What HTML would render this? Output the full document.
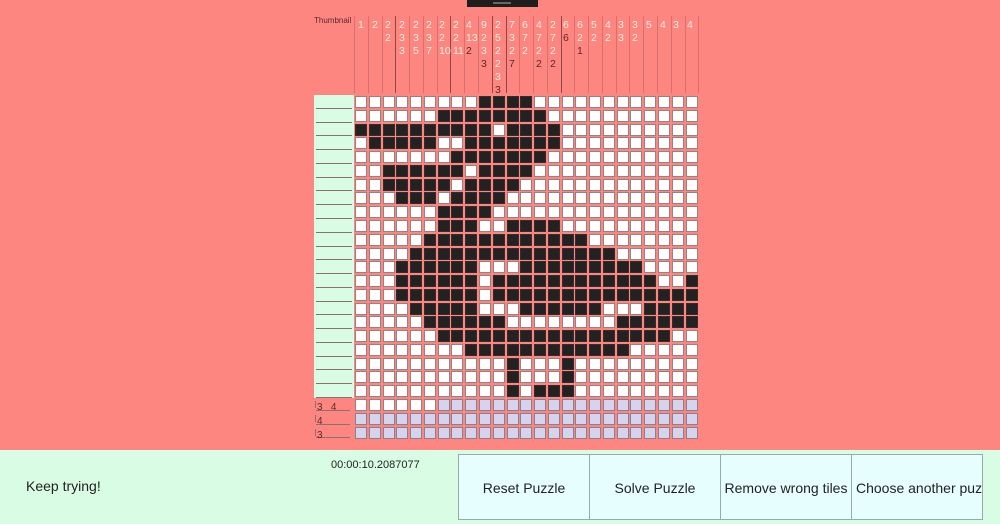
<!DOCTYPE html>
<html><head><meta charset="utf-8"><style>
html,body{margin:0;padding:0}
body{width:1000px;height:524px;background:#fe8680;position:relative;overflow:hidden;font-family:"Liberation Sans",sans-serif}
.c{position:absolute;width:12px;height:12px;box-sizing:border-box;border:1px solid #9a8080;background:#fff}
.b{background:#222;border-color:#3a2a2a}
.l{background:#d4d4ee;border-color:#8a8090}
.v{position:absolute;top:16px;height:77px;width:1px;background:#d87070}
.v.d{background:#8a4848}
.n{position:absolute;font-size:10.5px;color:#fbeede;line-height:13px}
.gl{position:absolute;left:316px;width:36px;height:1px;background:#8a7070}
.btn{position:absolute;top:454px;height:66px;background:#e6fffe;border:1px solid #9aa;box-sizing:border-box;font-size:14px;color:#222;text-align:center;line-height:66px;white-space:nowrap;overflow:hidden}
</style></head><body>
<div style="position:absolute;left:467px;top:0;width:71px;height:7px;background:#1e1e1e"><div style="position:absolute;left:26px;top:2px;width:18px;height:2px;background:#666"></div></div>
<div style="position:absolute;left:314px;top:16px;font-size:8px;color:#5a2a2a">Thumbnail</div>
<div style="position:absolute;left:314px;top:95px;width:40px;height:303px;background:#d9fde4"></div>
<div id="g"></div>
<div style="position:absolute;left:317px;top:402px;font-size:10px;color:#5a2a2a;line-height:12px">3&nbsp;&nbsp;&nbsp;4</div>
<div style="position:absolute;left:317px;top:416px;font-size:10px;color:#5a2a2a;line-height:12px">4</div>
<div style="position:absolute;left:317px;top:430px;font-size:10px;color:#5a2a2a;line-height:12px">3</div>
<div class="n" style="left:358px;top:19px">1</div>
<div class="n" style="left:372px;top:19px">2</div>
<div class="n" style="left:385px;top:19px">2<br>2</div>
<div class="n" style="left:399px;top:19px">2<br>3<br>3</div>
<div class="n" style="left:413px;top:19px">2<br>3<br>5</div>
<div class="n" style="left:426px;top:19px">2<br>3<br>7</div>
<div class="n" style="left:439px;top:19px">2<br>2<br>10</div>
<div class="n" style="left:453px;top:19px">2<br>2<br>11</div>
<div class="n" style="left:466px;top:19px">4<br>13<br><span style="color:#5a2a2a">2</span></div>
<div class="n" style="left:481px;top:19px">9<br>2<br>3<br><span style="color:#5a2a2a">3</span></div>
<div class="n" style="left:495px;top:19px">2<br>5<br>2<br>2<br>3<br><span style="color:#5a2a2a">3</span></div>
<div class="n" style="left:509px;top:19px">7<br>3<br>2<br><span style="color:#5a2a2a">7</span></div>
<div class="n" style="left:522px;top:19px">6<br>7<br>2</div>
<div class="n" style="left:536px;top:19px">4<br>7<br>2<br><span style="color:#5a2a2a">2</span></div>
<div class="n" style="left:550px;top:19px">2<br>7<br>2<br><span style="color:#5a2a2a">2</span></div>
<div class="n" style="left:563px;top:19px">6<br><span style="color:#5a2a2a">6</span></div>
<div class="n" style="left:577px;top:19px">6<br>2<br><span style="color:#5a2a2a">1</span></div>
<div class="n" style="left:591px;top:19px">5<br>2</div>
<div class="n" style="left:605px;top:19px">4<br>2</div>
<div class="n" style="left:618px;top:19px">3<br>3</div>
<div class="n" style="left:632px;top:19px">3<br>2</div>
<div class="n" style="left:646px;top:19px">5</div>
<div class="n" style="left:660px;top:19px">4</div>
<div class="n" style="left:673px;top:19px">3</div>
<div class="n" style="left:687px;top:19px">4</div>
<div style="position:absolute;left:0;top:450px;width:1000px;height:74px;background:#d9fde4"></div>
<div style="position:absolute;left:26px;top:478px;font-size:14px;color:#222">Keep trying!</div>
<div style="position:absolute;left:331px;top:459px;font-size:11px;color:#222">00:00:10.2087077</div>
<div class="btn" style="left:458px;width:132px">Reset Puzzle</div>
<div class="btn" style="left:589px;width:132px">Solve Puzzle</div>
<div class="btn" style="left:720px;width:132px">Remove wrong tiles</div>
<div class="btn" style="left:851px;width:132px;text-align:left;padding-left:4px">Choose another puzzle</div>
<script>
var B=[[[9,12]],[[6,13]],[[0,9],[11,14]],[[1,5],[8,14]],[[7,13]],[[2,7],[9,12]],[[2,6],[8,11]],[[3,5],[7,10]],[[6,9]],[[6,8],[11,14]],[[5,16]],[[4,18]],[[3,8],[12,20]],[[3,8],[10,21],[24,24]],[[3,8],[10,24]],[[4,8],[12,17],[21,24]],[[5,10],[19,24]],[[6,22]],[[8,19]],[[11,11],[15,15]],[[11,11],[15,15]],[[11,11],[13,15]]];
var h='',P=13.77,dk={3:1,7:1,10:1,11:1,15:1};
for(var c=0;c<=25;c++)h+='<div class="v'+(dk[c]?' d':'')+'" style="left:'+(354+c*P).toFixed(1)+'px"></div>';
for(var r=0;r<22;r++)h+='<div class="gl" style="top:'+(95+(r+1)*P-1).toFixed(1)+'px"></div>';
for(var r=22;r<25;r++)h+='<div class="gl" style="top:'+(95+(r+1)*P-2).toFixed(1)+'px;width:34px"></div><div style="position:absolute;left:315px;width:1px;height:7px;background:#8a7070;top:'+(95+r*P+3).toFixed(1)+'px"></div>';
for(var r=0;r<25;r++)for(var c=0;c<25;c++){var cl='c';
 if(r<22){B[r].forEach(function(s){if(c>=s[0]&&c<=s[1])cl='c b'});}
 else if(r>22||c>=6)cl='c l';
 h+='<div class="'+cl+'" style="left:'+(355+c*P).toFixed(1)+'px;top:'+(96+r*P).toFixed(1)+'px"></div>';}
document.getElementById('g').innerHTML=h;
</script>
</body></html>
